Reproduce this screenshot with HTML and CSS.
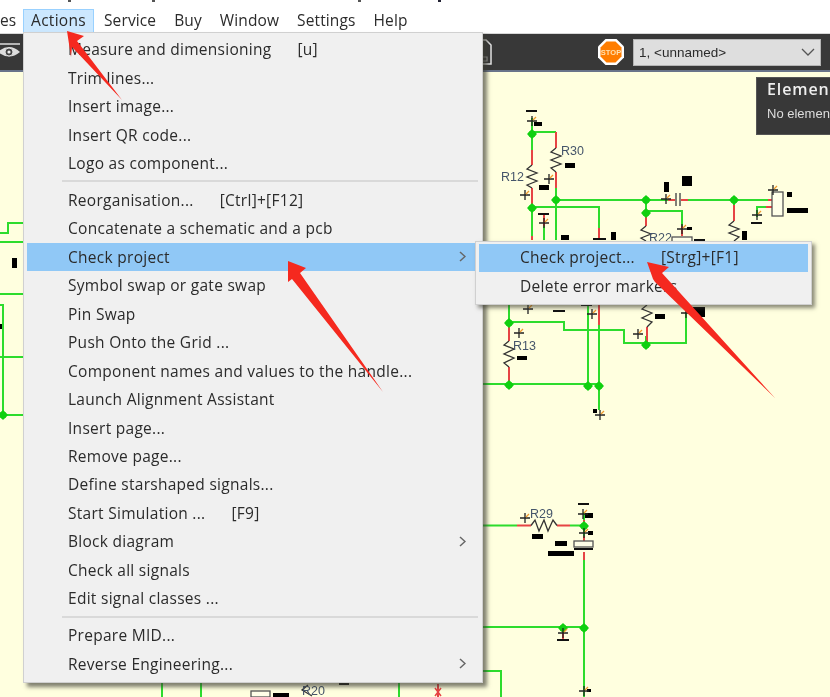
FILE: index.html
```html
<!DOCTYPE html>
<html lang="en">
<head>
<meta charset="utf-8">
<title>Actions menu</title>
<link rel="stylesheet" href="styles.css">
</head>
<body>
<div class="screen">
  <div class="top-strip">
    <i class="desc d1"></i><i class="desc d2"></i><i class="desc d3"></i><i class="desc d4"></i>
  </div>
  <nav class="menubar">
    <span class="mb-item mb-clip">es</span>
    <span class="mb-item mb-active">Actions</span>
    <span class="mb-item">Service</span>
    <span class="mb-item">Buy</span>
    <span class="mb-item">Window</span>
    <span class="mb-item">Settings</span>
    <span class="mb-item">Help</span>
  </nav>
  <div class="toolbar">
    <svg class="eye" width="21" height="22" viewBox="0 0 21 22">
      <path d="M0 3H20" class="eye-line"/>
      <path d="M-2 11Q9 1 20 11Q9 20 -2 11Z" class="eye-shape"/>
      <circle cx="9" cy="11" r="4" class="eye-ball"/>
      <circle cx="9" cy="11" r="1.6" class="eye-pupil"/>
    </svg>
    <svg class="doc" width="10" height="26" viewBox="0 0 10 26">
      <path d="M0 1H4L9 6V25H0" class="doc-line"/>
      <path d="M0 18H5V22H0" class="doc-mark"/>
    </svg>
    <svg class="stop" width="28" height="28" viewBox="0 0 28 28">
      <polygon points="8.5,1 19.5,1 27,8.5 27,19.5 19.5,27 8.5,27 1,19.5 1,8.5" class="stop-out"/>
      <polygon points="9.5,3.5 18.5,3.5 24.5,9.5 24.5,18.5 18.5,24.5 9.5,24.5 3.5,18.5 3.5,9.5" class="stop-in"/>
      <text x="14" y="16.5" class="stop-text">STOP</text>
    </svg>
    <div class="select">
      <span>1, &lt;unnamed&gt;</span>
      <svg width="14" height="8" viewBox="0 0 14 8"><path d="M1 1L7 7L13 1" class="sel-chev"/></svg>
    </div>
  </div>
  <div class="canvas">
    <svg class="schematic" width="830" height="625" viewBox="0 72 830 625">
      <defs>
        <g id="n"><polygon points="0,-5 5,0 0,5 -5,0"/><circle r="3.6"/></g>
        <g id="c"><path d="M-5 0H5M0 -5V5" class="cross"/><path d="M1 -1L4 -4" class="tick"/></g>
      </defs>
      <g class="green">
        <path d="M532 118V150M532 132H556M532 208V240M556 188V240M556 200H668M688 200H768M646 200V213M646 211H682V226"/>
        <path d="M532 207H599V228M544 226V240M734 200V205M757 217V207H766"/>
        <path d="M0 233H8V223H23M0 242H23M0 294H23M0 305H3V415M0 357H23M0 415H23"/>
        <path d="M509 305V323M509 322H564V330H624V343H686V312M483 384H599M588 305V384M599 325V410M646 343V336"/>
        <path d="M483 525.500H517M570 525.500H584M584 512V540M584 552V697M483 627H584M563 627V632M483 671H501V697"/>
        <path d="M162 683V697M201 683V697M399 683V697"/>
      </g>
      <g class="red">
        <path d="M532 150V165M532 188V207M532 236V240M556 132V148M556 172V188M668 200H675M681 200H688M768 200H772M766 207H772M599 228V238M544 215V226M682 226V236M734 205V221M646 213V226"/>
        <path d="M599 305V325M509 323V341M509 367V384M647 327V343"/>
        <path d="M517 525.500H531M557 525.500H570M584 520V526M584 536V541M584 552V560M563 632V640M438 684V697"/>
        <path d="M435 688L441 696M441 688L435 696" class="thin"/>
      </g>
      <g class="nodes">
        <use href="#n" x="532" y="134"/><use href="#n" x="532" y="208"/><use href="#n" x="556" y="200"/>
        <use href="#n" x="646" y="200"/><use href="#n" x="646" y="213"/><use href="#n" x="734" y="200"/>
        <use href="#n" x="3" y="415"/><use href="#n" x="509" y="323"/><use href="#n" x="509" y="385"/>
        <use href="#n" x="588" y="386"/><use href="#n" x="599" y="386"/><use href="#n" x="646" y="345"/>
        <use href="#n" x="584" y="526"/><use href="#n" x="584" y="628"/><use href="#n" x="563" y="628"/>
      </g>
      <g class="zig">
        <path d="M556 148L551 152L561 156L551 160L561 164L551 168L556 172"/>
        <path d="M532 165L527 169L537 173L527 177L537 181L527 185L532 188"/>
        <path d="M646 226L641 230L651 234L641 238L646 241"/>
        <path d="M734 221L729 225L739 229L729 233L739 237L734 241"/>
        <path d="M509 341L504 345L514 349L504 354L514 358L504 363L509 367"/>
        <path d="M647 305L642 309L652 313L642 318L652 322L647 327"/>
        <path d="M531 525.500L535 520L539 531L544 520L548 531L553 520L557 525.500"/>
        <path d="M308 685L302 690L312 696"/>
      </g>
      <g class="bars">
        <path d="M526 111H537M593 239H606M538 214H549M751 223H762M553 311H565M581 305H592M578 504H589M557 640H569M339 684H349M694 240H705M574 549H593"/>
      </g>
      <g class="blocks">
        <rect x="534" y="122" width="8" height="4"/><rect x="565" y="163" width="10" height="5"/>
        <rect x="539" y="185" width="10" height="5"/><rect x="561" y="235" width="8" height="5"/>
        <rect x="611" y="232" width="5" height="8"/><rect x="664" y="182" width="5" height="10"/>
        <rect x="682" y="176" width="10" height="10"/><rect x="787" y="192" width="5" height="5"/>
        <rect x="787" y="208" width="21" height="5"/><rect x="742" y="231" width="5" height="9"/>
        <rect x="687" y="227" width="5" height="3"/><rect x="12" y="258" width="5" height="10"/>
        <rect x="693" y="307" width="12" height="10"/><rect x="655" y="314" width="10" height="5"/>
        <rect x="517" y="356" width="10" height="4"/><rect x="593" y="409" width="4" height="4"/>
        <rect x="0" y="324" width="2" height="5"/><rect x="585" y="513" width="8" height="5"/>
        <rect x="588" y="531" width="5" height="4"/><rect x="532" y="534" width="11" height="5"/>
        <rect x="555" y="541" width="12" height="5"/><rect x="548" y="551" width="26" height="5"/>
        <rect x="587" y="689" width="4" height="3"/><rect x="273" y="693" width="16" height="4"/>
      </g>
      <g class="parts">
        <rect x="772" y="192" width="11" height="24"/><rect x="574" y="541" width="19" height="6"/>
        <rect x="251" y="691" width="19" height="6"/><rect x="672" y="237" width="20" height="6"/>
        <path d="M676 193V206M680 193V206"/>
      </g>
      <use href="#c" x="532" y="121"/><use href="#c" x="525" y="195"/><use href="#c" x="549" y="179"/>
      <use href="#c" x="666" y="199"/><use href="#c" x="682" y="229"/><use href="#c" x="773" y="190"/>
      <use href="#c" x="757" y="215"/><use href="#c" x="544" y="223"/><use href="#c" x="528" y="309"/>
      <use href="#c" x="592" y="314"/><use href="#c" x="686" y="313"/><use href="#c" x="638" y="334"/>
      <use href="#c" x="519" y="333"/><use href="#c" x="600" y="415"/><use href="#c" x="525" y="518"/>
      <use href="#c" x="583" y="514"/><use href="#c" x="584" y="533"/><use href="#c" x="563" y="633"/>
      <use href="#c" x="584" y="691"/>
      <text x="561" y="155" class="ref">R30</text>
      <text x="501" y="181" class="ref">R12</text>
      <text x="649" y="242" class="ref">R22</text>
      <text x="513" y="350" class="ref">R13</text>
      <text x="530" y="518" class="ref">R29</text>
      <text x="302" y="695" class="ref">R20</text>
    </svg>
    <div class="element-panel">
      <div class="ep-title">Elemen</div>
      <div class="ep-sub">No elemen</div>
    </div>
  </div>

  <div class="menu">
    <div class="row"><span>Measure and dimensioning</span><span class="key">[u]</span></div>
    <div class="row"><span>Trim lines...</span></div>
    <div class="row"><span>Insert image...</span></div>
    <div class="row"><span>Insert QR code...</span></div>
    <div class="row"><span>Logo as component...</span></div>
    <div class="sep"></div>
    <div class="row"><span>Reorganisation...</span><span class="key">[Ctrl]+[F12]</span></div>
    <div class="row"><span>Concatenate a schematic and a pcb</span></div>
    <div class="row row-on"><span>Check project</span><svg class="chev" width="7" height="11" viewBox="0 0 7 11"><path d="M1 1L6 5.500L1 10"/></svg></div>
    <div class="row"><span>Symbol swap or gate swap</span></div>
    <div class="row"><span>Pin Swap</span></div>
    <div class="row"><span>Push Onto the Grid ...</span></div>
    <div class="row"><span>Component names and values to the handle...</span></div>
    <div class="row"><span>Launch Alignment Assistant</span></div>
    <div class="row"><span>Insert page...</span></div>
    <div class="row"><span>Remove page...</span></div>
    <div class="row"><span>Define starshaped signals...</span></div>
    <div class="row"><span>Start Simulation ...</span><span class="key">[F9]</span></div>
    <div class="row"><span>Block diagram</span><svg class="chev" width="7" height="11" viewBox="0 0 7 11"><path d="M1 1L6 5.500L1 10"/></svg></div>
    <div class="row"><span>Check all signals</span></div>
    <div class="row"><span>Edit signal classes ...</span></div>
    <div class="sep"></div>
    <div class="row"><span>Prepare MID...</span></div>
    <div class="row"><span>Reverse Engineering...</span><svg class="chev" width="7" height="11" viewBox="0 0 7 11"><path d="M1 1L6 5.500L1 10"/></svg></div>
  </div>

  <div class="submenu">
    <div class="row row-on sub-row"><span>Check project...</span><span class="key">[Strg]+[F1]</span></div>
    <div class="row sub-row"><span>Delete error markers</span></div>
  </div>

  <svg class="arrows" width="830" height="697" viewBox="0 0 830 697">
    <polygon points="67,31 84,36 77,41 122,100 72,47 71,57"/>
    <polygon points="288,261 306,268 300,273 383,392 292,279 288,282"/>
    <polygon points="647,262 669,267 662,273 775,398 655,282 653,279"/>
  </svg>
</div>
</body>
</html>
```
FILE: styles.css
```css
* { box-sizing: border-box; }
html, body { margin: 0; padding: 0; background: #fff; }
.screen {
  position: relative;
  width: 830px;
  height: 697px;
  overflow: hidden;
  display: flex;
  flex-direction: column;
  background: #fff;
  font-family: "Open Sans", "Noto Sans", sans-serif;
  font-size: 15.500px;
  letter-spacing: .28px;
  color: #2b2b2b;
  filter: blur(0.55px);
}
.top-strip { position: relative; height: 8px; flex: none; }
.desc { position: absolute; top: 0; width: 3px; height: 2px; background: #555; }
.d1 { left: 68px; }
.d2 { left: 152px; }
.d3 { left: 358px; }
.d4 { left: 438px; background: #223; }

.menubar { height: 25px; flex: none; display: flex; align-items: center; background: #fff; letter-spacing: .12px; }
.mb-item { display: block; padding: 0 9px; line-height: 22px; margin-bottom: 1px; white-space: nowrap; }
.mb-clip { width: 23px; padding: 0 10px 0 0; text-align: right; }
.mb-active { background: #cce8ff; border: 1px solid #99d1ff; height: 24px; line-height: 21px; width: 71px; text-align: center; padding: 0; margin: 0 1px 0 0; letter-spacing: .28px; }

.toolbar {
  height: 39px;
  flex: none;
  display: flex;
  align-items: center;
  background: #383838;
  border-top: 1px solid #d8d8d8;
  border-bottom: 2px solid #69748a;
  padding-right: 9px;
}
.eye { flex: none; }
.eye-line { stroke: #ddd; stroke-width: 1.500; fill: none; }
.eye-shape { fill: #ddd; }
.eye-ball { fill: #444; stroke: #ddd; stroke-width: 1; }
.eye-pupil { fill: #eee; }
.doc { flex: none; margin-left: 461px; margin-right: auto; }
.doc-line { fill: none; stroke: #e4e4e4; stroke-width: 1.500; }
.doc-mark { fill: none; stroke: #999; stroke-width: 1.200; }
.stop { flex: none; margin-right: 8px; }
.stop-out { fill: #fff; }
.stop-in { fill: #ff7d00; }
.stop-text { font-family: "Liberation Sans", sans-serif; font-size: 7.500px; font-weight: 700; letter-spacing: 0; fill: #ffe0b0; text-anchor: middle; }
.select {
  width: 188px;
  height: 27px;
  flex: none;
  display: flex;
  align-items: center;
  justify-content: space-between;
  padding: 0 5px 0 5px;
  font-family: "Liberation Sans", sans-serif;
  font-size: 13.500px;
  letter-spacing: 0;
  background: #dedede;
  border: 1px solid #b4b4b4;
}
.sel-chev { fill: none; stroke: #555; stroke-width: 1.300; }

.canvas { position: relative; flex: 1; background: #ffffdf; }
.schematic { position: absolute; left: 0; top: 0; }
.green path { fill: none; stroke: #2ddc2d; stroke-width: 2; }
.red path { fill: none; stroke: #e64444; stroke-width: 2; }
.red .thin { stroke-width: 1.500; }
.nodes { fill: #10d010; }
.zig path { fill: none; stroke: #333; stroke-width: 1.300; }
.bars path { fill: none; stroke: #111; stroke-width: 2; }
.blocks { fill: #000; }
.parts rect { fill: #ffffe8; stroke: #555; stroke-width: 1.300; }
.parts path { fill: none; stroke: #555; stroke-width: 1.500; }
.cross { fill: none; stroke: #222; stroke-width: 1.300; }
.tick { fill: none; stroke: #f19a2c; stroke-width: 1.200; }
.ref { font-family: "Liberation Sans", sans-serif; font-size: 12.500px; letter-spacing: 0; fill: #45556a; }

.element-panel {
  position: absolute;
  left: 756px;
  top: 5px;
  width: 74px;
  height: 58px;
  padding: 0 0 0 10px;
  background: #383838;
  border: 1px solid #555;
  border-right: 0;
  color: #eee;
  white-space: nowrap;
}
.ep-title { font-size: 16px; font-weight: 600; line-height: 23px; letter-spacing: .9px; }
.ep-sub { font-family: "Liberation Sans", sans-serif; font-size: 13px; line-height: 26px; letter-spacing: 0; color: #ddd; }

.menu {
  position: absolute;
  left: 23px;
  top: 32px;
  width: 460px;
  height: 651px;
  padding: 2px 3px 0;
  background: #f0f0f0;
  border: 1px solid #d0d0d0;
  box-shadow: 4px 4px 4px rgba(60, 60, 50, .65);
}
.row {
  height: 28.450px;
  display: flex;
  align-items: center;
  padding-left: 41px;
  padding-right: 13px;
  white-space: nowrap;
}
.row-on { background: #90c8f6; }
.key { margin-left: 26px; }
.chev { margin-left: auto; fill: none; stroke: #666; stroke-width: 1.500; }
.sep { height: 8.600px; margin-left: 35px; margin-right: 1px; display: flex; align-items: center; }
.sep::before { content: ""; flex: 1; height: 2px; background: #d9d9d9; }

.submenu {
  position: absolute;
  left: 475px;
  top: 241px;
  width: 337px;
  height: 64px;
  padding: 2px 3px;
  background: #f0f0f0;
  border: 1px solid #d0d0d0;
  box-shadow: 3px 3px 4px rgba(60, 60, 50, .6);
}
.sub-row { padding-left: 41px; padding-bottom: 2px; }

.arrows { position: absolute; left: 0; top: 0; fill: #f5291f; pointer-events: none; }
```
